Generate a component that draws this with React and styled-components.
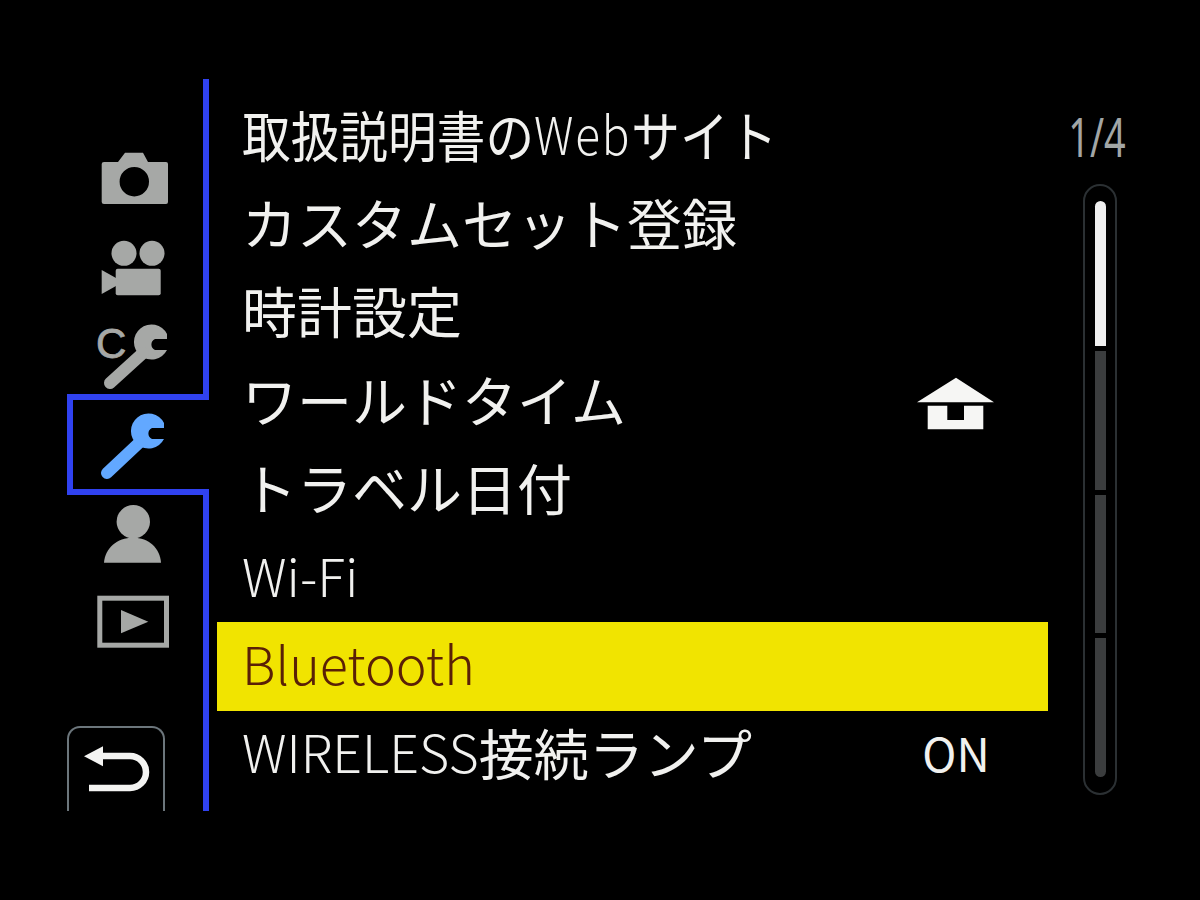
import React from 'react'
import styled, { createGlobalStyle } from 'styled-components'

const GlobalStyle = createGlobalStyle`
  html, body {
    margin: 0;
    padding: 0;
    background: #000;
  }
`

const BLUE = '#3042f0'
const GREY = '#a6a8a6'

const Screen = styled.div`
  display: flex;
  width: 1200px;
  height: 900px;
  box-sizing: border-box;
  padding: 79px 0 0 67px;
  background: #000;
  font-family: "Noto Sans CJK JP", "Noto Sans", sans-serif;
  overflow: hidden;
`

const Sidebar = styled.nav`
  display: flex;
  flex-direction: column;
  flex-shrink: 0;
  width: 142px;
  height: 732px;
`

const TopTabs = styled.div`
  display: flex;
  flex-direction: column;
  justify-content: flex-end;
  gap: 18px;
  box-sizing: border-box;
  height: 315px;
  border-right: 6px solid ${BLUE};
`

const BottomTabs = styled.div`
  display: flex;
  flex-direction: column;
  gap: 15px;
  box-sizing: border-box;
  height: 316px;
  padding-top: 3px;
  border-right: 6px solid ${BLUE};
`

const Tab = styled.div`
  display: flex;
  align-items: center;
  justify-content: center;
  height: 72px;
`

const ActiveTab = styled(Tab)`
  box-sizing: border-box;
  height: 101px;
  padding-right: 12px;
  border: solid ${BLUE};
  border-width: 6px 0 6px 6px;
`

const BackButton = styled.div`
  display: flex;
  align-items: center;
  justify-content: center;
  box-sizing: border-box;
  width: 98px;
  height: 85px;
  margin-top: auto;
  border: 2px solid #6c767c;
  border-bottom: 0;
  border-radius: 13px 13px 0 0;
`

const Menu = styled.ul`
  flex-shrink: 0;
  width: 831px;
  margin: 0 0 0 8px;
  padding: 13px 0 0;
  list-style: none;
`

const Row = styled.li`
  display: flex;
  align-items: center;
  justify-content: space-between;
  box-sizing: border-box;
  height: 88.4px;
  padding: 0 32px 6px 25px;
  color: ${props => (props.$selected ? '#5a2006' : '#f1f1ef')};
  background: ${props => (props.$selected ? '#f1e400' : 'transparent')};
  font-size: 55px;
  line-height: 1;
  white-space: nowrap;
`

const Label = styled.span`
  display: block;
  transform-origin: left center;
  ${props => props.$condensed && 'transform: scaleX(0.885);'}
`

const Latin = styled.span`
  font-size: 52px;
  font-weight: 300;
  vertical-align: 2px;
  ${props => props.$spaced && 'letter-spacing: 2px;'}
`

const Value = styled.span`
  display: flex;
  align-items: center;
  justify-content: center;
  width: 120px;
  font-size: 46px;
`

const Pager = styled.div`
  display: flex;
  flex-direction: column;
  align-items: center;
  flex-shrink: 0;
  width: 34px;
  margin-left: 35px;
  padding-top: 38px;
`

const PageNumber = styled.div`
  height: 40px;
  margin-bottom: 27px;
  color: #a2a6a6;
  font-family: "Noto Sans", sans-serif;
  font-size: 54px;
  font-weight: 400;
  line-height: 38px;
  white-space: nowrap;
  transform: translateX(-3px) scaleX(0.7);
`

const Track = styled.div`
  display: flex;
  flex-direction: column;
  align-items: center;
  gap: 5px;
  box-sizing: border-box;
  width: 34px;
  height: 611px;
  padding-top: 15px;
  border: 2px solid #2b3033;
  border-radius: 17px;
`

const Segment = styled.div`
  flex-shrink: 0;
  width: 11px;
  height: ${props => (props.$active ? '145px' : '138.5px')};
  background: ${props => (props.$active ? '#f0f0f0' : '#3b3d3e')};
  border-radius: ${props => (props.$active ? '6px 6px 0 0' : props.$last ? '0 0 6px 6px' : '0')};
`

const HomeGlyph = styled.svg`
  display: block;
  margin-top: 12px;
`

// taller than the other tab icons so the letter's line box fits, same drawing origin
const CustomGlyph = styled.svg`
  display: block;
  margin-bottom: 4px;
`

const CameraIcon = () => (
  <svg width="80" height="72" viewBox="0 0 80 72">
    <path
      fill={GREY}
      fillRule="evenodd"
      d="M9 20 H23 L30 10.7 H48 L53 20 H71 Q73 20 73 22 V60 Q73 62 71 62 H9 Q6.7 62 6.7 60 V22 Q6.7 20 9 20 Z M39.3 25 A14.7 14.7 0 1 0 39.3 54.4 A14.7 14.7 0 1 0 39.3 25 Z"
    />
  </svg>
)

const MovieIcon = () => (
  <svg width="80" height="72" viewBox="0 0 80 72">
    <g fill={GREY}>
      <circle cx="29" cy="21.3" r="12.5" />
      <circle cx="57" cy="21.3" r="12.5" />
      <rect x="20.7" y="36.7" width="45" height="26.5" rx="2" />
      <path d="M6.7 38 L21 46 V54 L6.7 62 Z" />
    </g>
  </svg>
)

const CustomIcon = () => (
  <CustomGlyph width="80" height="76" viewBox="0 -4 80 76">
    <text
      x="1"
      y="35.5"
      fill={GREY}
      stroke={GREY}
      strokeWidth="0.8"
      fontFamily="Liberation Sans, sans-serif"
      fontSize="42"
    >
      C
    </text>
    <path
      fill={GREY}
      d="M72 12 V17 H60 A6 6 0 0 0 60 28 H72 A17.5 17.5 0 1 1 72 12 Z"
    />
    <line x1="48" y1="31" x2="15" y2="61" stroke={GREY} strokeWidth="12" strokeLinecap="round" />
  </CustomGlyph>
)

const SetupIcon = () => (
  <svg width="80" height="72" viewBox="0 0 80 72">
    <path
      fill="#62a8ff"
      d="M69 14 V19 H57 A6 6 0 0 0 57 30 H69 A17.5 17.5 0 1 1 69 14 Z"
    />
    <line x1="45" y1="33" x2="12" y2="64" stroke="#62a8ff" strokeWidth="12" strokeLinecap="round" />
  </svg>
)

const PersonIcon = () => (
  <svg width="80" height="72" viewBox="0 0 80 72">
    <g fill={GREY}>
      <circle cx="38.3" cy="23.7" r="16.7" />
      <path d="M9 64.7 C10 50 22 39.7 38 39.7 C54 39.7 65 50 66 64.7 Z" />
    </g>
  </svg>
)

const PlayIcon = () => (
  <svg width="80" height="72" viewBox="0 0 80 72">
    <rect x="4.8" y="13.2" width="66.7" height="47" fill="none" stroke={GREY} strokeWidth="5" />
    <path fill={GREY} d="M26 25 V48.3 L53.3 36.7 Z" />
  </svg>
)

const BackIcon = () => (
  <svg width="70" height="52" viewBox="0 0 70 52">
    <path fill="#f4f4f2" d="M3 12.2 L22 2.2 V22.2 Z" />
    <path fill="none" stroke="#f4f4f2" strokeWidth="6.5" d="M20 12 H49 A16 16 0 0 1 49 44 H8" />
  </svg>
)

const HomeIcon = () => (
  <HomeGlyph width="78" height="54" viewBox="0 0 78 54">
    <path
      fill="#f6f6f4"
      fillRule="evenodd"
      d="M39 0.7 L77 25.3 H0 Z M10.7 28.7 H30.3 V43 H47 V28.7 H66.3 V52.3 H10.7 Z"
    />
  </HomeGlyph>
)

const rows = [
  { id: 'manual', condensed: true, label: <>取扱説明書の<Latin $spaced>Web</Latin>サイト</> },
  { id: 'custom', label: 'カスタムセット登録' },
  { id: 'clock', label: '時計設定' },
  { id: 'world', label: 'ワールドタイム', value: <HomeIcon /> },
  { id: 'travel', label: 'トラベル日付' },
  { id: 'wifi', label: <Latin>Wi-Fi</Latin> },
  { id: 'bluetooth', selected: true, label: <Latin>Bluetooth</Latin> },
  { id: 'lamp', label: <><Latin>WIRELESS</Latin>接続ランプ</>, value: 'ON' },
]

export default function App() {
  return (
    <Screen>
      <GlobalStyle />
      <Sidebar>
        <TopTabs>
          <Tab><CameraIcon /></Tab>
          <Tab><MovieIcon /></Tab>
          <Tab><CustomIcon /></Tab>
        </TopTabs>
        <ActiveTab><SetupIcon /></ActiveTab>
        <BottomTabs>
          <Tab><PersonIcon /></Tab>
          <Tab><PlayIcon /></Tab>
          <BackButton><BackIcon /></BackButton>
        </BottomTabs>
      </Sidebar>
      <Menu>
        {rows.map(row => (
          <Row key={row.id} $selected={row.selected}>
            <Label $condensed={row.condensed}>{row.label}</Label>
            {row.value && <Value>{row.value}</Value>}
          </Row>
        ))}
      </Menu>
      <Pager>
        <PageNumber>1/4</PageNumber>
        <Track>
          <Segment $active />
          <Segment />
          <Segment />
          <Segment $last />
        </Track>
      </Pager>
    </Screen>
  )
}
